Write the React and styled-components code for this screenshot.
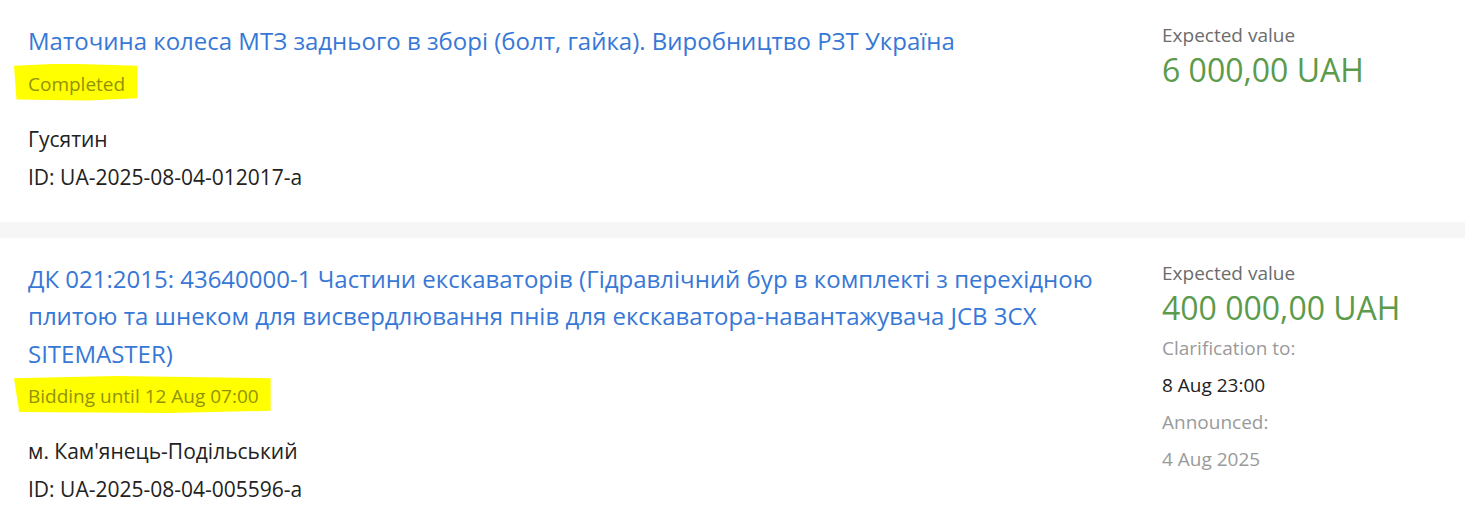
import React from "react";
import styled, { createGlobalStyle } from "styled-components";

const GlobalStyle = createGlobalStyle`
  body {
    margin: 0;
    background: #f6f6f6;
    font-family: "Open Sans", "Noto Sans", sans-serif;
  }
`;

const List = styled.div`
  display: flex;
  flex-direction: column;
  gap: 16px;
`;

const Card = styled.div`
  display: grid;
  grid-template-columns: 1100px 280px;
  column-gap: 34px;
  padding: 22px 23px 26px 28px;
  background: #fff;
`;

const Main = styled.div`
  display: flex;
  flex-direction: column;
`;

const Title = styled.a`
  font-size: 24px;
  line-height: 37.5px;
  color: #3778d6;
  text-decoration: none;
`;

const Status = styled.div`
  margin-top: 4px;
  font-size: 19px;
  line-height: 26px;
`;

// highlighter mark drawn over the status in the screenshot
const Marker = styled.span`
  display: inline-block;
  margin-left: -14px;
  padding: 7px 12px 4px 14px;
  background: #ffff00;
  color: #929208;
  clip-path: polygon(0 6%, 40% 0, 100% 6%, 100% 94%, 60% 100%, 2% 97%);
`;

const Place = styled.div`
  margin-top: 19px;
  font-size: 21px;
  line-height: 38px;
  color: #222;
`;

const Id = styled.div`
  font-size: 21px;
  line-height: 38px;
  color: #222;
`;

const Side = styled.div`
  display: flex;
  flex-direction: column;
`;

const Label = styled.div`
  font-size: 19px;
  line-height: 26px;
  color: ${(p) => (p.$light ? "#9a9a9a" : "#6c6c6c")};
`;

const Amount = styled.div`
  font-size: 32px;
  line-height: 48px;
  color: #5c9a4c;
  margin-top: -2px;
  margin-bottom: 3px;
`;

const Value = styled.div`
  font-size: 19px;
  line-height: 48px;
  color: ${(p) => (p.$muted ? "#9a9a9a" : "#222")};
`;

const Tender = ({ title, status, place, id, amount, extra }) => (
  <Card>
    <Main>
      <Title href="#">{title}</Title>
      <Status>
        <Marker>{status}</Marker>
      </Status>
      <Place>{place}</Place>
      <Id>ID: {id}</Id>
    </Main>
    <Side>
      <Label>Expected value</Label>
      <Amount>{amount}</Amount>
      {extra &&
        extra.map((row) => (
          <React.Fragment key={row.label}>
            <Label $light>{row.label}</Label>
            <Value $muted={row.muted}>{row.value}</Value>
          </React.Fragment>
        ))}
    </Side>
  </Card>
);

const App = () => (
  <>
    <GlobalStyle />
    <List>
      <Tender
        title="Маточина колеса МТЗ заднього в зборі (болт, гайка). Виробництво РЗТ Україна"
        status="Completed"
        place="Гусятин"
        id="UA-2025-08-04-012017-a"
        amount="6 000,00 UAH"
      />
      <Tender
        title="ДК 021:2015: 43640000-1 Частини екскаваторів (Гідравлічний бур в комплекті з перехідною плитою та шнеком для висвердлювання пнів для екскаватора-навантажувача JCB 3CX SITEMASTER)"
        status="Bidding until 12 Aug 07:00"
        place="м. Кам'янець-Подільський"
        id="UA-2025-08-04-005596-a"
        amount="400 000,00 UAH"
        extra={[
          { label: "Clarification to:", value: "8 Aug 23:00" },
          { label: "Announced:", value: "4 Aug 2025", muted: true },
        ]}
      />
    </List>
  </>
);

export default App;
